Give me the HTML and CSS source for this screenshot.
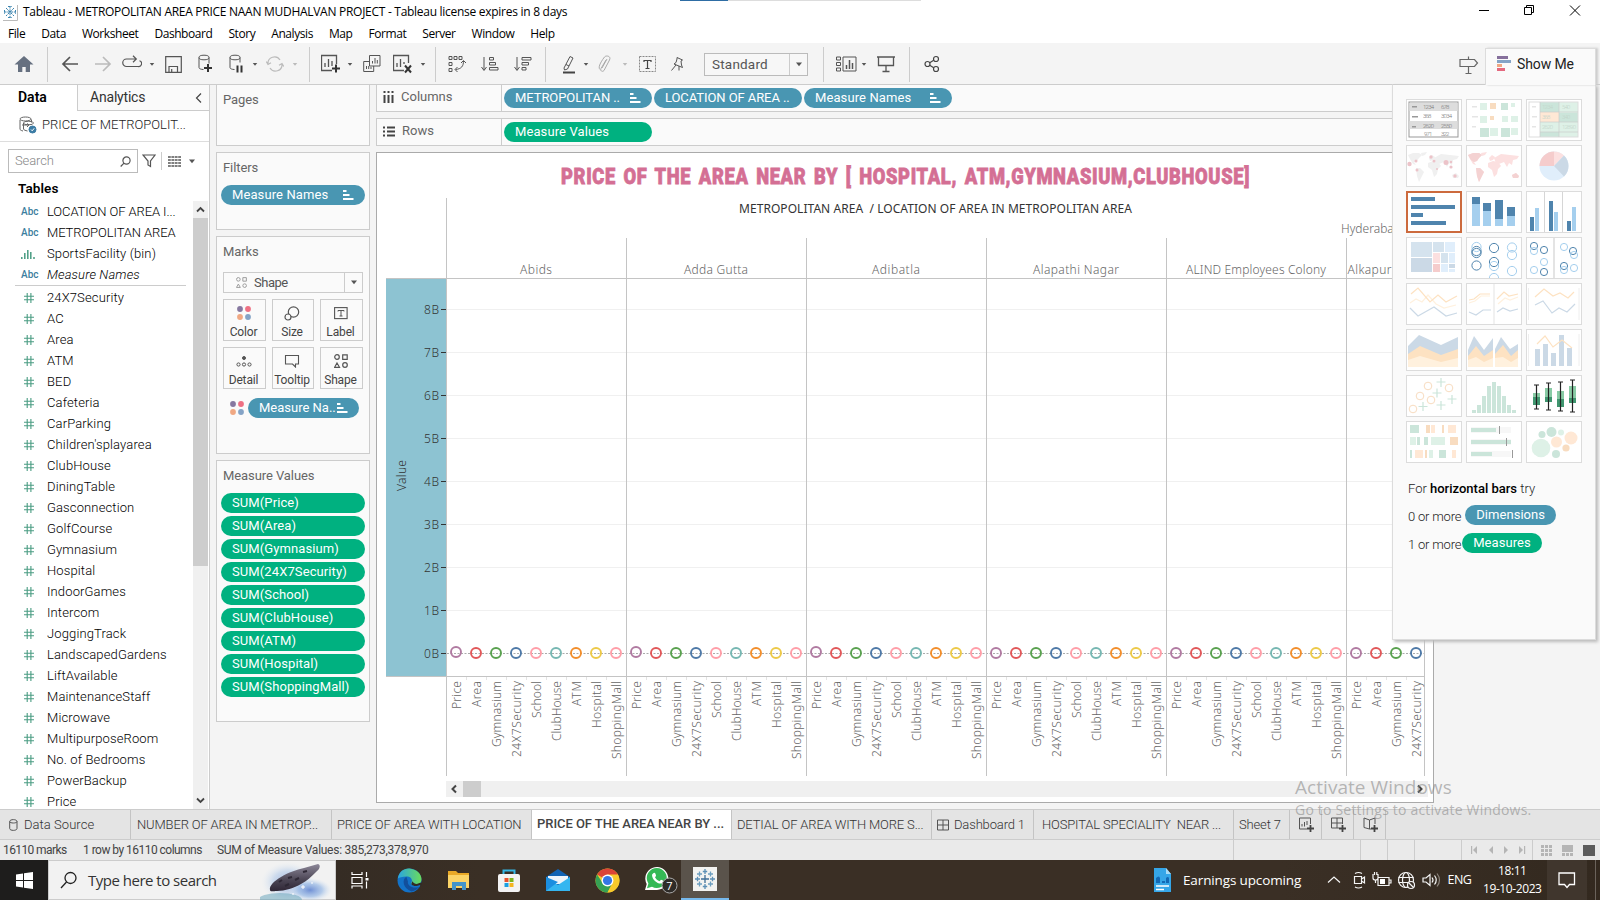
FILE: index.html
```html
<!DOCTYPE html>
<html lang="en">
<head>
<meta charset="utf-8">
<title>Tableau - METROPOLITAN AREA PRICE NAAN MUDHALVAN PROJECT</title>
<link rel="stylesheet" href="styles.css">
</head>
<body>
<svg width="0" height="0" class="defs">
  <defs>
    <symbol id="caret" viewBox="0 0 8 5"><path d="M1 .5h6L4 4.2z" fill="currentColor"/></symbol>
    <symbol id="sort" viewBox="0 0 12 12"><path d="M1 1h3.5v2H1zM1 5h6.500v2H1zM1 9h10.500v2H1z" fill="#fff"/></symbol>
    <symbol id="dots" viewBox="0 0 14 14"><circle cx="3" cy="3" r="2.900" fill="#8678a0"/><circle cx="11" cy="3" r="2.900" fill="#ee7083"/><circle cx="3" cy="11" r="2.900" fill="#f0a883"/><circle cx="11" cy="11" r="2.900" fill="#84a3c6"/></symbol>
    <symbol id="shapes" viewBox="0 0 14 14"><g fill="none" stroke="currentColor" stroke-width="1.200"><circle cx="3" cy="3" r="2.300"/><path d="M8.700.8h4.500v4.500H8.700zM3 9l2.500 4.300H.6z"/><circle cx="11" cy="11" r="2.300"/></g></symbol>
    <symbol id="hash" viewBox="0 0 10 10"><path d="M3.200 0v10M6.900 0v10M0 3.200h10M0 6.800h10" stroke="#4a9c82" stroke-width="1.100"/></symbol>
    <symbol id="bars" viewBox="0 0 14 10"><path d="M.8 10V8M3.800 10V4M6.800 10V1M9.800 10V3M13 10V8" stroke="#4a9c82" stroke-width="1.500"/></symbol>
    <symbol id="snow" viewBox="0 0 24 24"><rect width="24" height="24" fill="#f3f3f1"/><g stroke-width="1.300" fill="none"><path d="M12 8v8M8 12h8" stroke="#3f6e96"/><path d="M12 2v5M9.800 4.500h4.400M12 17v5M9.800 19.500h4.400M2 12h5M4.500 9.800v4.400M17 12h5M19.500 9.800v4.400" stroke="#5c8fb5"/><path d="M6.500 4.500v5M4 7h5M17.500 4.500v5M15 7h5M6.500 14.500v5M4 17h5M17.500 14.500v5M15 17h5" stroke="#6d9fc0"/></g></symbol>
    <symbol id="snow-small" viewBox="0 0 16 18"><path d="M15.500 2v15.500H1" fill="none" stroke="#bbb"/><path d="M8 3v12M2 9h12M4 5l8 8M12 5l-8 8M6 3.500h4M6 14.500h4M2.500 7v4M13.500 7v4" fill="none" stroke="#3f86b0" stroke-dasharray="2.500 .8"/></symbol>
  </defs>
</svg>

<header class="titlebar">
  <svg class="app-icon" width="16" height="18"><use href="#snow-small"/></svg>
  <span class="app-title">Tableau - METROPOLITAN AREA PRICE NAAN MUDHALVAN PROJECT - Tableau license expires in 8 days</span>
  <i class="load-bar"><b></b></i>
  <svg class="win-buttons" width="110" height="20" fill="none" stroke="#000" stroke-width="1"><path d="M4 10.500h10M49.500 7.500h7v7h-7zM51.500 7.500v-2h7v7h-2M95 5.500l10 10M105 5.500l-10 10"/></svg>
</header>

<nav class="menu"><span>File</span><span>Data</span><span>Worksheet</span><span>Dashboard</span><span>Story</span><span>Analysis</span><span>Map</span><span>Format</span><span>Server</span><span>Window</span><span>Help</span></nav>

<div class="toolbar">
  <div class="group g-home"><svg width="20" height="18"><path d="M10 1l9.500 8.500H16V17h-4.300v-5H8.300v5H4V9.500H.5z" fill="#667080"/></svg></div>
  <div class="group g-nav">
    <svg class="t-back" width="18" height="18"><path d="M17 9H2M9 2L2 9l7 7" fill="none" stroke="#555" stroke-width="1.700"/></svg>
    <svg class="t-fwd" width="18" height="18"><path d="M1 9h15M9 2l7 7-7 7" fill="none" stroke="#bbb" stroke-width="1.700"/></svg>
    <svg class="t-redo" width="20" height="18"><path d="M14 4H4.500a3.500 3.500 0 000 7.500h11.500a3 3 0 001.500-5.800M11 .8L14.300 4 11 7.200" fill="none" stroke="#555" stroke-width="1.200"/></svg>
    <svg class="car first" width="6" height="5"><use href="#caret"/></svg>
    <svg class="t-save" width="17" height="17"><path d="M.7.700h15.600v15.600H.7zM4 16v-5.500h8.500V16M6.700 16v-3" fill="none" stroke="#555" stroke-width="1.200"/></svg>
    <svg class="t-db" width="16" height="20"><path d="M1 3.500v10c0 1.200 2 2 4.500 2M11 3.500v6" fill="none" stroke="#555"/><ellipse cx="6" cy="3.500" rx="5" ry="2.300" fill="none" stroke="#555"/><path d="M10 10v8M6 14h8" stroke="#333" stroke-width="2"/></svg>
    <svg class="t-pause" width="15" height="20"><path d="M1 3.500v10c0 1.200 2 2 4.500 2M11 3.500v5" fill="none" stroke="#555"/><ellipse cx="6" cy="3.500" rx="5" ry="2.300" fill="none" stroke="#555"/><path d="M8.500 11.500v7M12.500 11.500v7" stroke="#333" stroke-width="2"/></svg>
    <svg class="car" width="6" height="5"><use href="#caret"/></svg>
    <svg class="t-ref" width="18" height="18"><path d="M2 9a6.500 6.500 0 0112-4M16 9A6.500 6.500 0 014 13M.3 6.500L2 9.500l3-1.800M17.800 11.500L16 8.500l-3 1.800" fill="none" stroke="#bbb" stroke-width="1.200"/></svg>
    <svg class="car dim" width="6" height="5"><use href="#caret"/></svg>
  </div>
  <div class="group g-sheet">
    <svg width="20" height="20"><path d="M15.500 10V1.500h-15v15H11M4 13V9M7.500 13V5M11 12V7" fill="none" stroke="#555" stroke-width="1.300"/><path d="M15 10.500v8M11 14.500h8" stroke="#333" stroke-width="2"/></svg>
    <svg class="car c1" width="6" height="5"><use href="#caret"/></svg>
    <svg class="t-dup" width="18" height="18" fill="none" stroke="#555"><path d="M6.500.5h10.500v10.500H6.500zM6.500 6.500H.7v10h10V11M9.500 8.500V6M12 8.500V3M14.300 8.500V5M3.500 14v-3M5.700 14v-3M8 14v-2"/></svg>
    <svg class="t-clr" width="20" height="20"><path d="M15.500 9V1.500h-15v15H11M4 13V9M7.500 13V5M11 10V8" fill="none" stroke="#555" stroke-width="1.300"/><path d="M12 11.500l6 7M18 11.500l-6 7" stroke="#333" stroke-width="2"/></svg>
    <svg class="car c2" width="6" height="5"><use href="#caret"/></svg>
  </div>
  <div class="group g-sort">
    <svg width="18" height="18" fill="none" stroke="#555"><path d="M1 1.500h3v3H1zM6 1.500h3v3H6zM11 1.500h3v3h-3zM1 7.500h3v3H1zM1 13.500h3v3H1zM15.500 6c0 5-2 8-8 8.500M13 8l2.500-2.500L18 8M9.500 12L7 14.500 9.500 17"/></svg>
    <svg width="18" height="18" fill="none" stroke="#555"><path d="M3 2v13M.5 12L3 15.500 5.500 12M8.500 2.500h4v2.500h-4zM8.500 7.500h6v2.500h-6zM8.500 12.500h8.500v2.500h-8.500z"/></svg>
    <svg width="18" height="18" fill="none" stroke="#555"><path d="M3 2v13M.5 12L3 15.500 5.500 12M8 2.500h9v2.500H8zM8 7.500h6.500v2.500H8zM8 12.500h4v2.500H8z"/></svg>
  </div>
  <div class="group g-edit">
    <svg width="14" height="19"><path d="M2 13L8 1.500l3 1.500L5.500 14l-3 1zM4 9.500l3 1.500" fill="none" stroke="#555"/><path d="M1 17.500h12" stroke="#444" stroke-width="2"/></svg>
    <svg class="car e1" width="6" height="5"><use href="#caret"/></svg>
    <svg class="e2" width="14" height="18"><path d="M4 13l5-9M2 14.500C-1 12 5 4 6.500 2s7-1 5 3L6 15.500c-2 2-4 0-3-2L8 5" fill="none" stroke="#aaa"/></svg>
    <svg class="car dim e3" width="6" height="5"><use href="#caret"/></svg>
    <svg class="e4" width="18" height="17"><rect x=".5" y=".5" width="16" height="15" fill="none" stroke="#888" stroke-dasharray="2 1"/><path d="M5 6V4.500h7V6M8.500 4.500v8M6.500 12.500h4" stroke="#444" fill="none" stroke-width="1.200"/></svg>
    <svg class="e5" width="14" height="17"><path d="M7 1.500l5.500 2.500-1.500 1 .5 4 1 2.500-8.500-3.500L6 6.500 7 3zM6 9L1.500 14.500M9 10v4.500" fill="none" stroke="#555"/></svg>
    <div class="fit-select"><span>Standard</span><i><svg width="8" height="5"><use href="#caret"/></svg></i></div>
  </div>
  <div class="group g-view">
    <svg width="21" height="16" fill="none" stroke="#555"><path d="M.5 1h4v3h-4zM.5 6.500h4v3h-4zM.5 12h4v3h-4zM7 1h13v14H7z"/><path d="M10.500 13V9M13.500 13V4M16.500 13V7" stroke-width="1.500"/></svg>
    <svg class="car v1" width="6" height="5"><use href="#caret"/></svg>
    <svg class="v2" width="18" height="18" fill="none" stroke="#555"><path d="M0 2h18M1.500 2v8.500h15V2M9 10.500v6M5.500 16.500h7" stroke-width="1.300"/></svg>
  </div>
  <div class="group g-share"><svg width="16" height="18" fill="none" stroke="#444" stroke-width="1.200"><circle cx="3.500" cy="9" r="2.500"/><circle cx="12" cy="4" r="2.500"/><circle cx="12" cy="14" r="2.500"/><path d="M5.700 7.700l4-2.400M5.700 10.300l4 2.400"/></svg></div>
  <svg class="guide" width="20" height="20" fill="none" stroke="#666" stroke-width="1.200"><path d="M1 4.500h14.500L18.500 8l-3 3.500H1zM9.500 1.500v3M9.500 11.500v6.500M6.500 18.500h6"/></svg>
  <div class="showme-tab"><svg width="14" height="16"><path d="M0 0h11v3H0z" fill="#86709c"/><path d="M0 4h14v3H0z" fill="#84a3c6"/><path d="M0 8h5v3H0z" fill="#f0a883"/><path d="M0 12h8v3H0z" fill="#e4697f"/></svg><span>Show Me</span></div>
</div>

<main class="work">
  <aside class="data-pane">
    <div class="pane-tabs"><b>Data</b><span>Analytics<svg width="7" height="10"><path d="M6 .5L1.500 5 6 9.500" fill="none" stroke="#444" stroke-width="1.200"/></svg></span></div>
    <div class="source"><svg width="18" height="18" fill="none" stroke="#666"><path d="M1 4v9c0 1 1 1.500 3 2M4.500 7v6c0 1 2 1.500 4 2M12.500 3.500v3"/><ellipse cx="6.500" cy="3" rx="5.500" ry="2"/><ellipse cx="9.500" cy="7" rx="5" ry="1.800"/><path d="M3 9h7M8 7.500L10 9l-2 2"/><circle cx="13.500" cy="13.500" r="3.500" fill="#3b7ca5" stroke="#3b7ca5"/><path d="M12 13.500l1.200 1.300 2-2.500" stroke="#fff"/></svg><span>PRICE OF METROPOLIT...</span></div>
    <div class="search-row">
      <div class="search"><span>Search</span><svg width="11" height="11" fill="none" stroke="#555" stroke-width="1.200"><circle cx="6.500" cy="4.500" r="3.600"/><path d="M4 7.200L.7 10.500"/></svg></div>
      <svg class="funnel" width="14" height="14"><path d="M1 1h12L8.500 7v5.500L6 11V7z" fill="none" stroke="#555" stroke-width="1.200"/></svg>
      <i class="vr"></i>
      <svg class="cols" width="13" height="11"><path d="M0 1h13M0 4h13M0 7h13M0 10h13" stroke="#555" stroke-width="1.400" stroke-dasharray="2.800 .6"/></svg>
      <svg class="car" width="8" height="5"><use href="#caret"/></svg>
    </div>
    <h3>Tables</h3>
    <div class="field-area">
      <div class="fields" id="fields"></div>
      <div class="vscroll"><svg width="15" height="17"><path d="M4 10.500L7.500 7l3.500 3.500" fill="none" stroke="#444" stroke-width="1.800"/></svg><i></i><svg width="15" height="17"><path d="M4 6.500L7.500 10 11 6.500" fill="none" stroke="#444" stroke-width="1.800"/></svg></div>
    </div>
  </aside>

  <section class="cards">
    <div class="card pages"><h4>Pages</h4></div>
    <div class="card filters"><h4>Filters</h4><div class="pill blue"><span>Measure Names</span><svg width="12" height="12"><use href="#sort"/></svg></div></div>
    <div class="card marks"><h4>Marks</h4>
      <div class="mark-select"><svg width="11" height="11"><use href="#shapes"/></svg><span>Shape</span><i><svg width="8" height="5"><use href="#caret"/></svg></i></div>
      <div class="mark-grid">
        <div><svg width="14" height="14"><use href="#dots"/></svg>Color</div>
        <div><svg width="16" height="15" fill="none" stroke="#555" stroke-width="1.200"><circle cx="9.500" cy="6" r="5.200"/><circle cx="4" cy="11" r="3" fill="#fafafa"/></svg>Size</div>
        <div><svg width="14" height="14"><rect x=".6" y="1.600" width="12.500" height="11" fill="none" stroke="#555" stroke-width="1.100"/><path d="M4 5.500V4.500h6v1M7 4.500v5.500M5.500 10h3" stroke="#555" fill="none"/></svg>Label</div>
        <div><svg width="16" height="14" fill="none" stroke="#555"><circle cx="8" cy="4" r="1.500" fill="#555"/><circle cx="2.500" cy="10.500" r="1.600"/><circle cx="8" cy="10.500" r="1.600"/><circle cx="13.500" cy="10.500" r="1.600"/></svg>Detail</div>
        <div><svg width="16" height="14"><path d="M1.500 1.500h13v8.500h-3V13l-3-3h-7z" fill="none" stroke="#555" stroke-width="1.100"/></svg>Tooltip</div>
        <div><svg width="14" height="14" class="dark"><use href="#shapes"/></svg>Shape</div>
      </div>
      <div class="mark-pill"><svg width="14" height="14"><use href="#dots"/></svg><div class="pill blue"><span>Measure Na..</span><svg width="12" height="12"><use href="#sort"/></svg></div></div>
    </div>
    <div class="card values"><h4>Measure Values</h4><div class="stack" id="measures"></div></div>
  </section>

  <section class="sheet">
    <div class="shelf"><div class="label"><svg width="11" height="12"><path d="M1.500 0v2M1.500 4v8M5.500 0v2M5.500 4v8M9.500 0v2M9.500 4v8" stroke="#444" stroke-width="2"/></svg>Columns</div>
      <div class="pill blue cap"><span>METROPOLITAN ..</span><svg width="12" height="12"><use href="#sort"/></svg></div>
      <div class="pill blue cap"><span>LOCATION OF AREA ..</span></div>
      <div class="pill blue"><span>Measure Names</span><svg width="12" height="12"><use href="#sort"/></svg></div></div>
    <div class="shelf"><div class="label"><svg width="12" height="11"><path d="M0 1.500h2M4 1.500h8M0 5.500h2M4 5.500h8M0 9.500h2M4 9.500h8" stroke="#444" stroke-width="2"/></svg>Rows</div><div class="pill green"><span>Measure Values</span></div></div>
    <div class="viz">
      <svg id="chart" width="1056" height="624" viewBox="377 153 1056 624"></svg>
      <div class="hscroll"><svg width="17" height="16"><path d="M10 4.500L6.500 8l3.500 3.500" fill="none" stroke="#444" stroke-width="2"/></svg><i></i><svg width="17" height="16"><path d="M7 4.500L10.500 8 7 11.500" fill="none" stroke="#444" stroke-width="2"/></svg></div>
    </div>
  </section>

  <aside class="showme">
    <div class="thumbs" id="thumbs"></div>
    <p class="tip">For <b>horizontal bars</b> try</p>
    <p class="need"><span>0 or more</span><span class="pill blue">Dimensions</span></p>
    <p class="need second"><span>1 or more</span><span class="pill green">Measures</span></p>
  </aside>
</main>

<div class="tabs">
  <div class="w131 src"><svg width="9" height="12" fill="none" stroke="#555"><path d="M.7 2.500v7c0 2.500 7.300 2.500 7.300 0v-7c0-2.500-7.300-2.500-7.300 0c0 2 7.300 2 7.300 0"/></svg>Data Source</div>
  <div class="w201">NUMBER OF AREA IN METROP...</div>
  <div class="w200">PRICE OF AREA WITH LOCATION</div>
  <div class="w200 on">PRICE OF THE AREA NEAR BY ...</div>
  <div class="w200">DETIAL OF AREA WITH MORE S...</div>
  <div class="w102"><svg width="12" height="12" fill="none" stroke="#555"><path d="M.5 1h11v10H.5zM6 1v10M.5 6h11"/></svg>Dashboard 1</div>
  <div class="w200 hosp">HOSPITAL SPECIALITY &nbsp;NEAR ...</div>
  <div class="w56">Sheet 7</div>
  <div class="w32"><svg width="16" height="16"><path d="M11.500 7V1h-11v11H8M3 9.500V7M5.500 9.500V5M8 8V4" fill="none" stroke="#555"/><path d="M11.500 8v7M8 11.500h7" stroke="#444" stroke-width="1.800"/></svg></div>
  <div class="w32"><svg width="16" height="16"><path d="M11.500 7V1h-11v10H8M6 1v10M.5 6h11" fill="none" stroke="#555"/><path d="M11.500 8v7M8 11.500h7" stroke="#444" stroke-width="1.800"/></svg></div>
  <div class="w32"><svg width="16" height="16"><path d="M6.500 3v9L1 10.500V1l5.500 2L12 1v6M6.500 12H8" fill="none" stroke="#555"/><path d="M11.500 8v7M8 11.500h7" stroke="#444" stroke-width="1.800"/></svg></div>
</div>
<div class="status">
  <span class="s1">16110 marks</span><span class="s2">1 row by 16110 columns</span><span class="s3">SUM of Measure Values: 385,273,378,970</span>
  <i class="w127"></i><i class="w27"></i><i class="w27"></i><i class="w47"></i>
  <i class="w71"><svg width="60" height="12" fill="#b5b5b5"><path d="M3 2h1.200v8H3zM9 2v8L5 6zM25 2v8l-4-4zM36 2v8l4-4zM51 2v8l4-4zM56 2h1.200v8H56z"/></svg></i>
  <i class="w67"><svg width="54" height="12"><path d="M0 1h3v3H0zM4 1h3v3H4zM8 1h3v3H8zM0 5h3v3H0zM4 5h3v3H4zM8 5h3v3H8zM0 9h3v3H0zM4 9h3v3H4zM8 9h3v3H8zM21 1h11v7H21zM21 9h3v3h-3zM25 9h3v3h-3zM29 9h3v3h-3z" fill="#b5b5b5"/><path d="M42 1h12v11H42z" fill="#5c5c5c"/></svg></i>
</div>

<footer class="taskbar">
  <div class="start"><svg width="17" height="17" fill="#fff"><path d="M0 2.500L7 1.500V8H0zM8 1.300L17 0v8H8zM0 9h7v6.500L0 14.500zM8 9h9v8l-9-1.300z"/></svg></div>
  <div class="tb-search"><svg width="18" height="18" fill="none" stroke="#222" stroke-width="1.300"><circle cx="10.500" cy="7" r="5.500"/><path d="M6.500 11L1 17"/></svg><span>Type here to search</span>
    <svg class="art" width="72" height="38" viewBox="0 0 72 38"><defs><radialGradient id="haze"><stop offset="0" stop-color="#6f8fd4"/><stop offset=".55" stop-color="#9dbce6" stop-opacity=".75"/><stop offset="1" stop-color="#dce8f4" stop-opacity="0"/></radialGradient><linearGradient id="rock" x2="0" y2="1"><stop stop-color="#8c8798"/><stop offset=".6" stop-color="#4a4453"/><stop offset="1" stop-color="#2f2635"/></linearGradient></defs><ellipse cx="28" cy="20" rx="27" ry="20" fill="url(#haze)" opacity=".6"/><ellipse cx="50" cy="28" rx="22" ry="12" fill="url(#haze)"/><ellipse cx="20" cy="38" rx="22" ry="7" fill="#5fa0b8" opacity=".5"/><path d="M10 28c-1-4 4-9 11-13 8-5 15-7 23-9l14-4c3 1 2 5-2 8-5 5-9 9-15 12-7 4-16 7-24 7-4 0-7 1-7-1z" fill="url(#rock)"/><path d="M19 20l3-2M28 16l4-1M25 24l4-2M35 18l4-2M43 10l4-1" stroke="#2e2835" stroke-width="2"/><path d="M43 23v4M41 25h4M33 31v2M52 20v2" stroke="#fff"/></svg></div>
  <div class="tb-icons">
    <svg width="18" height="18" fill="none" stroke="#fff" stroke-width="1.200"><path d="M1 1v2.500h10V1M1 6.500h10v6H1zM1 17.500V15h10v2.500M15.500 1v5M15.500 10.500v7"/><path d="M14.500 7h3v2.500h-3z" fill="#fff" stroke="none"/></svg>
    <svg width="25" height="25" viewBox="0 0 24 24"><defs><linearGradient id="e1" x2="1"><stop stop-color="#2aa5e0"/><stop offset="1" stop-color="#6bdc5b"/></linearGradient></defs><circle cx="12" cy="12" r="11.500" fill="#1372c8"/><path d="M.8 10C2 3 7-.3 13 .6c6 .8 10.500 5 10.500 10 0 4-3 6-6.500 6-3 0-4-1.500-3-3 1-2 0-5.500-5-5.500-4 0-7 1-8.200 2z" fill="url(#e1)"/><path d="M9 8.500C4.500 11 5.500 20 14 22.500c3-.5 6-2.500 7.500-4.500-6 2.500-12-1-11-5z" fill="#124f9c"/><path d="M14.500 12c.8 1.500-1 2.500-.5 3.800 2 2 5.500 1.600 7.500.4l1.500 1 1.500-3.500-3 .8c-2 1.500-6 1-7-2.500z" fill="#322b25"/></svg>
    <svg width="24" height="22"><path d="M1 2h8l2 2h11v15H1z" fill="#e9a927"/><path d="M1 6h21v13H1z" fill="#fbd467"/><path d="M5 21v-8h14v8h-4v-4H9v4z" fill="#4394c9"/></svg>
    <svg width="24" height="25"><path d="M6.500 7V2.500h11V7" fill="none" stroke="#35b6e4" stroke-width="2"/><rect x="1" y="6" width="22" height="18" rx="2" fill="#f3f3f3"/><path d="M7.500 10h4v4h-4z" fill="#e9532c"/><path d="M12.500 10h4v4h-4z" fill="#7db51b"/><path d="M7.500 15h4v4h-4z" fill="#1c9fe0"/><path d="M12.500 15h4v4h-4z" fill="#f4b51f"/></svg>
    <svg width="26" height="24"><path d="M1 9L13 1l12 8v14H1z" fill="#1263b3"/><path d="M3 8h20v8H3z" fill="#eef4fa"/><path d="M1 9l12 8 12-8v14H1z" fill="#35b6f0"/><path d="M1 23l12-9L1 9z" fill="#1b8ee0"/></svg>
    <svg width="25" height="25" viewBox="0 0 24 24"><circle cx="12" cy="12" r="11.500" fill="#f8ca2c"/><path d="M12 12L2 6.300A11.500 11.500 0 0122 6.300z" fill="#dc4437"/><path d="M2 6.300A11.500 11.500 0 0012 23.500L16.500 15 7 14z" fill="#36a154"/><path d="M12 6.300h10A11.500 11.500 0 0112 23.500l5-9z" fill="#f8ca2c"/><circle cx="12" cy="12" r="5.700" fill="#fff"/><circle cx="12" cy="12" r="4.400" fill="#3577e5"/></svg>
    <svg class="wa" width="34" height="28"><path d="M1 24l1.700-6A11.500 11.500 0 1113 24H7z" fill="#fff"/><path d="M3 22.300l1.400-4.800A10 10 0 118 20.800z" fill="#35b956"/><path d="M9 7.500c2-2 3 1 3 2.500l-1 1.200c1 2 2.500 3 4.500 4l1.500-1.500c2 .5 3.500 1.500 2 3-3 3-11-2-11-8z" fill="#fff"/><circle cx="25.500" cy="19.500" r="7.500" fill="#2e2b28" stroke="#aaa"/><text x="25.500" y="24" text-anchor="middle">7</text></svg>
    <div class="active"><svg width="24" height="24"><use href="#snow"/></svg></div>
  </div>
  <div class="tray">
    <svg width="19" height="24"><path d="M1 0h12l5 6v18H1z" fill="#35a6e8"/><path d="M13 0l5 6h-5z" fill="#a9dcf7"/><path d="M3 10q3-3 4 0v5H3zM9 13h3v2H9zM13 10q2-2 3 0v5h-3z" fill="#1369b5"/><path d="M3 18h13M3 21.500h8" stroke="#fff" stroke-width="1.500"/></svg>
    <span class="news">Earnings upcoming</span>
    <svg class="tray-icons" width="116" height="20" fill="none" stroke="#f5f5f5" stroke-width="1.200"><path d="M1 12.500L7 7l6 5.500M27.500 6.500h7v7h-7zM34.500 9l3-2v6l-3-2M28 3.500q3.500-2 7 0M28 17q3.500 2 7 0M51 7.500h11v8H51zM62 10h2v3h-2M46 4v4q0 2 2.500 2t2.500-2V4M48.500 10v3M47.500 2v3M49.800 2v3"/><path d="M53 9h5v5h-5z" fill="#fff" stroke="none"/><circle cx="79" cy="10" r="7.500"/><ellipse cx="79" cy="10" rx="3.500" ry="7.500"/><path d="M71.500 7.500h15M71.500 12.500h10"/><circle cx="84" cy="15" r="3.500" fill="#3a3027"/><path d="M81.500 12.500l5 5M96 8h3l4-3.500v11L99 12h-3zM105 7.500q2 2.500 0 5M107.500 5.500q3.500 4.500 0 9"/><path d="M110 3.500q5 6.500 0 13" stroke="#8b837b"/></svg>
    <span class="eng">ENG</span>
    <span class="clock">18:11<br>19-10-2023</span>
    <div class="action"><svg width="18" height="18"><path d="M1 2h15.500v11.500h-5L9 16.500 6.500 13.500H1z" fill="none" stroke="#fff" stroke-width="1.300"/></svg></div>
    <i class="peek"></i>
  </div>
</footer>

<div class="activate"><b>Activate Windows</b><span>Go to Settings to activate Windows.</span></div>
<script src="app.js"></script>
</body>
</html>
```
FILE: styles.css
```css
* { box-sizing: border-box; }
body { margin: 0; width: 1600px; height: 900px; overflow: hidden; position: relative; display: flex; flex-direction: column; background: #fff; color: #333; font: 300 13px/16px Roboto, "Open Sans", sans-serif; }
svg { display: block; flex: none; }
h3, h4, p { margin: 0; }
.defs { position: absolute; }

.titlebar { height: 24px; display: flex; align-items: center; padding-left: 2px; font: 12px/16px "Open Sans", "Noto Sans", sans-serif; color: #000; position: relative; }
.app-title { margin-left: 5px; white-space: nowrap; letter-spacing: -.28px; }
.load-bar { position: absolute; left: 680px; top: 0; width: 241px; height: 1px; background: #ddd; }
.load-bar b { display: block; width: 48px; height: 1px; background: #2e6da4; }
.win-buttons { margin-left: auto; margin-right: 15px; margin-bottom: 4px; }
.menu { height: 19px; display: flex; gap: 16px; padding-left: 8px; font: 12px/20px "Open Sans", "Noto Sans", sans-serif; color: #000; letter-spacing: -.43px; }

.toolbar { height: 41px; background: #f4f4f4; display: flex; color: #555; position: relative; }
.group { display: flex; align-items: center; margin: 4px 0 2px; height: 35px; border-right: 1px solid #ccc; }
.group > svg { margin-bottom: 1px; }
.g-home { width: 48px; padding-left: 14px; }
.g-nav { width: 262px; padding-left: 13px; }
.t-fwd { margin-left: 15px; } .t-redo { margin-left: 10px; } .g-nav .car { margin-left: 8px; } .g-nav .first { margin-left: 7px; }
.t-save { margin-left: 10px; } .t-db { margin-left: 16px; } .t-pause { margin-left: 15px; } .t-ref { margin-left: 8px; }
.dim { color: #bbb; }
.g-sheet { width: 126px; padding-left: 11px; }
.c1 { margin-left: 6px; } .t-dup { margin-left: 10px; } .t-clr { margin-left: 12px; } .c2 { margin-left: 7px; }
.g-sort { width: 110px; padding-left: 12px; gap: 15px; }
.g-edit { width: 278px; padding-left: 16px; }
.e1 { margin-left: 7px; } .e2 { margin-left: 9px; } .e3 { margin-left: 10px; } .e4 { margin-left: 11px; } .e5 { margin-left: 13px; }
.fit-select { margin: 0 0 1px 20px; width: 104px; height: 23px; border: 1px solid #bbb; background: #f7f7f7; display: flex; justify-content: space-between; padding-left: 7px; line-height: 21px; font-size: 13.5px; font-weight: 400; letter-spacing: .2px; }
.fit-select i, .mark-select i { width: 18px; border-left: 1px solid #ccc; display: grid; place-items: center; }
.g-view { width: 86px; padding-left: 12px; }
.v1 { margin-left: 4px; } .v2 { margin-left: 10px; }
.g-share { border: 0; padding-left: 14px; }
.guide { position: absolute; left: 1459px; top: 12px; }
.showme-tab { position: absolute; left: 1485px; top: 5px; width: 111px; height: 37px; background: #fafafa; border: 1px solid #dcdcdc; border-bottom: 0; display: flex; align-items: center; padding: 0 0 7px 11px; gap: 6px; z-index: 4; color: #222; font-size: 14px; font-weight: 400; box-shadow: 2px 0 2px #ccc; letter-spacing: -.1px; }

.work { height: 725px; display: flex; background: #f4f4f4; border-top: 1px solid #ccc; position: relative; }
.data-pane { width: 210px; background: #fff; border-right: 1px solid #ccc; display: flex; flex-direction: column; overflow: hidden; }
.pane-tabs { display: flex; height: 26px; line-height: 25px; }
.pane-tabs b { width: 77px; padding-left: 18px; color: #000; font-weight: 600; font-size: 14px; }
.pane-tabs span { flex: 1; border-left: 1px solid #ccc; border-bottom: 1px solid #ccc; background: #fafafa; padding: 0 7px 0 12px; display: flex; justify-content: space-between; align-items: center; font-size: 14px; font-weight: 400; letter-spacing: -.2px; }
.source { height: 31px; border-bottom: 1px solid #ddd; display: flex; align-items: center; padding: 0 0 3px 19px; gap: 5px; white-space: nowrap; letter-spacing: -.02px; color: #222; }
.search-row { display: flex; align-items: center; padding: 7px 0 0 8px; height: 31px; color: #555; }
.search { width: 130px; height: 24px; border: 1px solid #bbb; display: flex; align-items: center; justify-content: space-between; padding: 0 6px; color: #888; letter-spacing: -.1px; }
.funnel { margin-left: 4px; }
.vr { width: 1px; height: 18px; background: #ccc; margin: 0 6px 0 5px; }
.search-row .car { margin-left: 7px; }
h3 { font-size: 13.5px; line-height: 16px; font-weight: 600; color: #000; padding: 7px 0 0 18px; height: 28px; letter-spacing: .1px; }
.field-area { flex: 1; display: flex; min-height: 0; justify-content: space-between; }
.fields { width: 186px; padding-left: 15px; overflow: hidden; }
.field { height: 21px; display: grid; grid-template-columns: 32px 1fr; align-items: center; white-space: nowrap; color: #000; letter-spacing: .13px; }
.field svg, .field b { margin-left: 6px; }
.field svg.h { margin-left: 9px; }
.field b { font-size: 10px; color: #3c7e9e; font-weight: 500; letter-spacing: 0; font-style: normal; }
.field.up { letter-spacing: -.1px; }
.field.it { font-style: italic; }
.line { border-top: 1px solid #ccc; margin-bottom: 1px; }
.vscroll { width: 15px; background: #f0f0f0; display: flex; flex-direction: column; margin-right: 1px; }
.vscroll i { height: 348px; background: #cdcdcd; margin-bottom: auto; }

.cards { margin: -1px 0 0 6px; width: 154px; display: flex; flex-direction: column; gap: 6px; }
.card { border: 1px solid #ccc; background: #fafafa; padding: 0 4px; }
h4 { font-weight: 400; font-size: 13px; padding-left: 2px; color: #666; letter-spacing: -.08px; line-height: 16px; }
.pages { height: 62px; padding-top: 7px; }
.filters { height: 78px; padding-top: 7px; }
.marks { height: 218px; padding-top: 7px; }
.values { height: 262px; padding-top: 7px; }
.pill { height: 20px; border-radius: 10px; color: #fff; display: flex; align-items: center; justify-content: space-between; padding: 0 11px; white-space: nowrap; font-weight: 400; letter-spacing: .1px; }
.blue { background: #4996b2; }
.green { background: #00b180; }
.filters .pill { margin-top: 9px; width: 144px; }
.mark-select { margin: 12px 1px 0 2px; width: 140px; height: 21px; border: 1px solid #ccc; display: flex; align-items: center; color: #555; font-weight: 400; letter-spacing: -.5px; }
.mark-select > svg { margin: 0 7px 0 12px; color: #999; }
.mark-select i { height: 19px; margin-left: auto; color: #555; }
.mark-grid { margin: 6px 0 0 2px; display: grid; grid-template-columns: 43px 42px 43px; gap: 6px; font-size: 12px; line-height: 14px; width: 140px; font-weight: 400; color: #444; letter-spacing: -.15px; }
.mark-grid div { height: 42px; border: 1px solid #ccc; display: flex; flex-direction: column; align-items: center; justify-content: space-between; padding: 6px 2px 1px 0; white-space: nowrap; }
.mark-grid div > svg { color: #555; }
.mark-pill { display: flex; align-items: center; margin: 9px 0 0 9px; gap: 4px; }
.mark-pill .pill { width: 111px; padding-right: 11px; letter-spacing: 0; }
.stack { display: flex; flex-direction: column; gap: 3px; margin-top: 9px; width: 144px; }

.sheet { margin: -1px 0 0 6px; width: 1058px; flex: none; display: flex; flex-direction: column; gap: 6px; }
.shelf { height: 28px; border: 1px solid #ccc; background: #fafafa; display: flex; align-items: center; gap: 2px; padding-bottom: 1px; }
.shelf .label { width: 125px; height: 27px; border-right: 1px solid #ccc; display: flex; align-items: center; gap: 7px; padding: 0 0 1px 6px; color: #666; font-size: 13px; font-weight: 400; }
.shelf .pill { width: 148px; }
.shelf .pill.cap { letter-spacing: -.08px; }
.viz { height: 651px; background: #fff; border: 1px solid #aaa; }
.hscroll { margin: 4px 5px 0 69px; height: 16px; background: #f0f0f0; display: flex; }
.hscroll i { width: 18px; background: #cdcdcd; margin-right: auto; }
#chart { font-family: "Noto Sans", "Open Sans", sans-serif; font-size: 12px; font-weight: 300; fill: #666; }
#chart .head { font-family: Roboto, sans-serif; font-weight: 900; font-size: 22.5px; fill: #d46f94; stroke: #d46f94; stroke-width: .8; letter-spacing: .8px; word-spacing: 3px; }
#chart .sub { fill: #333; font-weight: 400; }
#chart .axis { fill: #333; }

.showme { position: absolute; left: 1392px; top: -1px; width: 204px; height: 556px; background: #fafafa; border: 1px solid #dcdcdc; border-top-color: #ccc; box-shadow: 2px 2px 3px #bbb; padding: 14px 0 0 13px; z-index: 3; color: #222; }
.thumbs { display: grid; grid-template-columns: repeat(3, 56px); gap: 4px; }
.thumbs svg { background: #fff; border: 1px solid #dcdcdc; }
.thumbs svg.sel { border: 2px solid #cc6a3d; }
.tip { margin: 18px 0 0 2px; }
.tip b { font-weight: 500; color: #000; }
.need { display: flex; align-items: center; gap: 4px; margin: 8px 0 0 2px; height: 20px; letter-spacing: -.2px; }
.need.second { gap: 1px; }
.need > span:first-child { padding-top: 3px; }
.need .pill { letter-spacing: .05px; }

.tabs { height: 31px; background: #e4e4e4; border-top: 1px solid #ccc; border-bottom: 1px solid #ccc; display: flex; color: #333; white-space: nowrap; }
.tabs div { border-right: 1px solid #c4c4c4; display: flex; align-items: center; padding-left: 5px; gap: 5px; letter-spacing: -.15px; overflow: hidden; }
.tabs .on { background: #fff; font-weight: 500; color: #444; padding-bottom: 1px; letter-spacing: -.05px; }
.tabs .src { padding-left: 9px; letter-spacing: .05px; gap: 6px; }
.tabs .w201 { padding-left: 6px; }
.tabs .hosp { padding-left: 8px; }
.tabs .w32 { padding-left: 9px; }
.w131 { width: 131px; } .w201 { width: 201px; } .w200 { width: 200px; } .w102 { width: 102px; } .w56 { width: 56px; } .w32 { width: 32px; }
.status { height: 20px; background: #eaeaea; display: flex; line-height: 20px; font-size: 12px; font-weight: 400; color: #444; white-space: nowrap; }
.status i { border-right: 1px solid #ccc; display: flex; align-items: center; }
.s1 { width: 80px; padding-left: 3px; letter-spacing: -.6px; } .s2 { width: 134px; padding-left: 3px; letter-spacing: -.53px; } .s3 { width: 1020px; padding-left: 3px; border-right: 1px solid #ccc; letter-spacing: -.27px; }
.w127 { width: 127px; } .w27 { width: 27px; } .w47 { width: 47px; } .w71 { width: 71px; padding-left: 6px; }
.status .w67 { padding-left: 8px; border: 0; }

.taskbar { height: 40px; background: linear-gradient(90deg, #292521, #3a2f25 30%, #3a2f25 80%, #33291f); display: flex; font-family: "Open Sans", "Noto Sans", sans-serif; font-weight: 400; color: #fff; }
.start { width: 48px; background: #1e1d1c; display: grid; place-items: center; }
.tb-search { width: 288px; background: #f2f2f2; border: 1px solid #ccc; color: #333; display: flex; align-items: center; font-size: 15px; padding-left: 11px; position: relative; letter-spacing: -.5px; }
.tb-search span { margin-left: 10px; white-space: nowrap; }
.art { position: absolute; right: 3px; top: 1px; }
.tb-icons { display: grid; grid-template-columns: 48px repeat(6, 49.500px) 48px; width: 393px; align-items: center; justify-items: center; }
.tb-icons .wa { margin-left: 7px; }
.wa text { font: 11px "Open Sans"; fill: #fff; }
.active { width: 48px; height: 40px; background: #5a534b; border-bottom: 2px solid #76b9ed; display: grid; place-items: center; }
.tb-icons > svg:nth-child(n+2) { position: relative; left: 1px; }
.tray { margin-left: auto; width: 447px; display: flex; align-items: center; white-space: nowrap; }
.news { margin-left: 11px; width: 144px; font-size: 13.5px; letter-spacing: -.13px; }
.eng { margin-left: 5px; font-size: 12.500px; letter-spacing: -.5px; width: 30px; }
.clock { width: 70px; text-align: center; font-size: 12px; line-height: 18px; letter-spacing: -.4px; }
.action { width: 40px; height: 40px; background: #40362d; display: grid; place-items: center; margin-left: auto; }
.peek { width: 1px; height: 40px; background: #6b635b; margin: 0 4px 0 8px; }
.activate { position: absolute; left: 1295px; top: 774px; z-index: 6; font-family: "Open Sans", sans-serif; font-weight: 400; color: rgba(135,135,135,.58); display: flex; flex-direction: column; white-space: nowrap; }
.activate b { font-weight: 400; font-size: 19px; line-height: 26px; letter-spacing: .05px; }
.activate span { font-size: 14px; line-height: 20px; letter-spacing: .2px; }
```
FILE: app.js
```js
const fields = ['24X7Security','AC','Area','ATM','BED','Cafeteria','CarParking',"Children'splayarea",'ClubHouse','DiningTable','Gasconnection','GolfCourse','Gymnasium','Hospital','IndoorGames','Intercom','JoggingTrack','LandscapedGardens','LiftAvailable','MaintenanceStaff','Microwave','MultipurposeRoom','No. of Bedrooms','PowerBackup','Price'];
const abc = '<b>Abc</b>';
document.getElementById('fields').innerHTML =
  `<div class="field up">${abc}<span>LOCATION OF AREA I...</span></div>` +
  `<div class="field up">${abc}<span>METROPOLITAN AREA</span></div>` +
  '<div class="field"><svg width="14" height="10"><use href="#bars"/></svg><span>SportsFacility (bin)</span></div>' +
  `<div class="field it">${abc}<span>Measure Names</span></div><div class="line"></div>` +
  fields.map(f => `<div class="field"><svg class="h" width="10" height="10"><use href="#hash"/></svg><span>${f}</span></div>`).join('');

document.getElementById('measures').innerHTML =
  ['Price','Area','Gymnasium','24X7Security','School','ClubHouse','ATM','Hospital','ShoppingMall']
    .map(m => `<div class="pill green"><span>SUM(${m})</span></div>`).join('');

/* Chart: one pane per location, nine measures in each pane */
const marks = [['Price','#b07aa1',28],['Area','#e15759',26],['Gymnasium','#59a14f',66],['24X7Security','#4e79a7',76],['School','#ff9da7',37],['ClubHouse','#76b7b2',60],['ATM','#f28e2b',25],['Hospital','#edc948',47],['ShoppingMall','#ff9da7',78]];
const panes = [['Abids',32],['Adda Gutta',64],['Adibatla',48],['Alapathi Nagar',86],['ALIND Employees Colony',140],['Alkapur',0]];
let s = '<rect x="386" y="279" width="60" height="397" fill="#8dc3d2"/>';
const line = (x1, y1, x2, y2, c, extra = '') => { s += `<path d="M${x1} ${y1}L${x2} ${y2}" stroke="${c}" ${extra}/>`; };
for (let i = 0; i <= 8; i++) {
  const y = 653.5 - 43 * i;
  if (i) line(447, y, 1424, y, '#f0f0f0');
  line(441, y, 446, y, '#333');
  s += `<text class="axis" x="424" y="${y + 4.5}" textLength="15">${i}B</text>`;
}
line(447, 653.5, 1424, 653.5, '#aaa', 'stroke-dasharray="2 1.500"');
line(386, 278.5, 1424, 278.5, '#c4c4c4');
line(386, 676.5, 1424, 676.5, '#c4c4c4');
line(446.5, 198, 446.5, 776, '#c4c4c4');
line(1424.5, 238, 1424.5, 776, '#c4c4c4');
panes.forEach(([name, w], p) => {
  const x = 446.5 + 180 * p;
  if (p) line(x, 238, x, 776, '#c4c4c4');
  s += w ? `<text x="${x + 89.5 - w / 2}" y="274" textLength="${w}">${name}</text>` : `<text x="${x + 1}" y="274" textLength="44">${name}</text>`;
  marks.forEach(([m, c, len], i) => {
    const cx = x + 9.5 + 20 * i;
    if (cx > 1420) return;
    if (i) line(cx - 9.5, 677, cx - 9.5, 680, '#e4e4e4');
    s += `<circle cx="${cx}" cy="${i === 0 && p < 3 ? 652 : 653}" r="5" fill="none" stroke="${c}" stroke-width="1.900"/>`;
    s += `<text transform="translate(${cx + 5} ${681 + len}) rotate(-90)" textLength="${len}">${m}</text>`;
  });
});
s += '<text x="1341" y="233" textLength="60">Hyderabad</text>';
s += '<text class="head" x="561" y="184" textLength="689" lengthAdjust="spacingAndGlyphs">PRICE OF THE AREA NEAR BY [ HOSPITAL, ATM,GYMNASIUM,CLUBHOUSE]</text>';
s += '<text class="sub" x="739" y="213" textLength="393">METROPOLITAN AREA &#160;/ LOCATION OF AREA IN METROPOLITAN AREA</text>';
s += '<text class="axis" transform="translate(406 491) rotate(-90)" textLength="31">Value</text>';
document.getElementById('chart').innerHTML = s;

/* Show Me thumbnails, each on a 56 x 42 grid */
const r = (c, ...a) => a.map(([x, y, w, h]) => `<rect x="${x}" y="${y}" width="${w}" height="${h}" fill="${c}"/>`).join('');
const p = (c, d, w = 1.2) => `<path d="${d}" fill="none" stroke="${c}" stroke-width="${w}"/>`;
const f = (c, d) => `<path d="${d}" fill="${c}"/>`;
const ring = (c, ...a) => a.map(([x, y, q = 4.6]) => `<circle cx="${x}" cy="${y}" r="${q}" fill="none" stroke="${c}"/>`).join('');
const dot = (c, ...a) => a.map(([x, y, q]) => `<circle cx="${x}" cy="${y}" r="${q}" fill="${c}"/>`).join('');
const t = (c, ...a) => a.map(([x, y, v]) => `<text x="${x}" y="${y}" font-size="6" fill="${c}" textLength="${v.length * 2.8}">${v}</text>`).join('');
const D = '#4f84ad', L = '#a5cfee', G = '#cbe5da', g = '#def1e7', O = '#ffe8d5', O2 = '#f8dcc0', B = '#cbd9e6', b = '#e0eefb', R = '#f5cccc', K = '#fce0e0', Y = '#fde2c2', Y2 = '#fff1de';
const world = 'M2 10l5-2 6 0 3 2-3 3-2 3-3 1 2 3-3-1-3-5zM15 8l6-1-2 3-3 1zM10 23l4 0 4 4-2 4-3 6-2-6zM23 13l3-3 3 2-2 3-3 1zM22 18l5-2 5 1 3 4-3 3-1 5-3 3-2-7-4-3zM28 13l7-4 9 1 9 1-2 3-4 1-1 5-3-2-2 4-3-5-5 2-4-3zM46 30l4-2 3 3-1 2-5 0z';
const area = (a, c, d) => f(B, a) + f(Y, c) + f(Y2, d);
const thumbs = [
  `<rect x="3" y="3" width="49" height="35" fill="#fff" stroke="#999"/>` + r('#ddd',[3.5,4,48,8],[3.5,22,48,8]) + r('#999',[6,7,5,1.5],[6,17,6,1.5],[6,27,4,1.5]) + t('#777',[17,10,'1234'],[35,10,'678'],[17,19,'368'],[35,19,'3034'],[17,28.5,'2620'],[35,28.5,'2550'],[18,36.5,'971'],[35,36.5,'322']),
  r('#e5e5e5',[6,7,5,1.5],[6,17,6,1.5],[6,27,4,1.5]) + r(g,[14,4,7,7],[45,4,4,4],[14,17,7,7],[36,17,6,6],[45,17,7,6],[24,29,8,8],[45,29,7,7]) + r(G,[35,4,7,7],[14,29,9,9],[35,29,9,9]) + r(O2,[24,4,6,6],[24,17,4,4]),
  r(g,[14,3,38,35]) + r(G,[14,3,19,10],[33,14,19,9],[14,33,19,5]) + r(O,[14,13,19,10]) + '<rect x="3" y="3" width="49" height="35" fill="none" stroke="#ddd"/>' + p('#ccc','M14 3v35M33 3v35M14 13h38M14 23h38M14 33h38',.7) + r('#e5e5e5',[6,7,4,1.5],[6,17,5,1.5],[6,27,4,1.5]) + t('#c3d5cb',[16,10,'1234'],[36,10,'540'],[16,20,'368'],[36,20,'340'],[16,30,'2620'],[36,30,'12890']),
  f('#f0f0f0', world) + dot('#ecc3c9',[3.500,19,2.200],[25,12,1.700],[28,16,1.500],[40,17.500,2.500],[45,22,1.600],[11,25,1.500],[49,31,1.700],[10,16,1.500],[45,17,1.200],[31,24,1]),
  f(K, world) + f('#f4d2d2','M2 10l5-2 6 0 3 2-3 3-2 3-3 1-3-2zM10 23l4 0 4 4-2 4-3 6-2-6zM46 30l4-2 3 3-1 2-5 0z'),
  dot(b,[28,21,14.500]) + f(R,'M28 21H13.500A14.500 14.500 0 0128 6.500z') + f(K,'M28 21V6.500a14.500 14.500 0 0110 4z') + f(B,'M28 21l10-10.500a14.500 14.500 0 010 21z'),
  r(D,[5,6,24,4],[5,14,44,4],[5,22,12,4],[5,30,35,4]),
  r(L,[6,13,8,22],[17,20,8,15],[29,28,8,7],[41,25,8,10]) + r(D,[6,6,8,7],[17,12,8,8],[29,9,8,19],[41,16,8,9]),
  p('#ccc','M18.500 0v42M36.500 0v42',.8) + r(D,[4,26,4,14],[23,10,4,30],[41,30,4,10]) + r(L,[9,17,4,23],[28,21,4,19],[46,16,4,24]),
  r('#d5e3ee',[5,5,21,15],[27,5,11,10],[35,16,7,10]) + r(B,[5,21,21,14],[43,27,6,4]) + r(b,[39,5,10,10],[43,16,6,10],[35,27,7,8],[43,32,6,3]) + r(K,[27,16,7,10]) + r(R,[27,27,7,8]),
  ring(D,[10.500,14],[28,11],[28,25],[10.500,28.500]) + ring(L,[10.500,10],[46,10.500],[46,18],[28,29],[46,34],[28,41]) + ring(D,[10.500,16]),
  p('#bbb','M28 0v42',.8) + ring(D,[8,9,3.600],[18,13,3.600],[18,35,3.600],[47,14,3.600],[38,29,3.600]) + ring(L,[8,14,3.600],[18,25,3.600],[8,33,3.600],[38,10,3.600],[48,18,3.600],[38,33,3.600],[48,31,3.600]),
  p(Y2,'M4 20l6-4 6 3 6-7 8 9 8 4 12-3') + p(Y,'M5 11l7-6 12 14 8-7 8 7 11-6') + p(B,'M4 25l8 8 16-9 12 9 11-3'),
  p('#e8e8e8','M28 0v42') + p(Y2,'M3 20l6-2 6-5 9 0M32 21l7-6 5 2 8-3') + p(Y,'M3 17l5-1 6-5h10M31 16l7-7 5 4 9-2') + p(B,'M3 29l7 3 7-5h8M31 29l6-4 7 3 8-2'),
  p(Y,'M9 14l9-8 9 7 7-3 8 5 6-6') + p(B,'M9 22l8-4 9 12 7-5 8 4 8-8') + p('#eee','M2.500 5v32M53 5v32',1),
  area('M2 17L13 6l22 10 17-8v30H2z','M2 25l12-8 21 9 17-6v18H2z','M2 31l12-4 21 6 17-4v9H2z'),
  area('M2 21L8 7l10 14 9-12v29H2zM29 20l6-12 9 12 8-5v23H29z','M2 27l8-10 8 10 9-6v17H2zM29 25l8-9 8 11 7-6v17H29z','M2 31l8-3 8 5 9-4v9H2zM29 29l8-1 8 5 7-4v9H29z'),
  r(B,[9,20,5,17],[17,15,5,22],[25,24,5,13],[33,6,5,31],[41,19,5,18]) + p(Y,'M11 15l8-8 8 11 9-7 10 8') + p('#eee','M2.500 5v32M53 5v32',1),
  ring(O2,[7,34,3.800],[14,21,3.800],[22,11,3.800],[25,25,3.800],[43,13,3.800]) + p(G,'M17 27v9M12.500 31.500h9M31 13.500v9M26.500 18h9M35 3v9M30.500 7h9M35 26v9M30.500 30h9M46 20v9M41.500 24h9'),
  r(G,[6,35,4,3],[11,30,4,8],[16,21,4,17],[21,11,4,27],[26,7,4,31],[31,11,4,27],[36,21,4,17],[41,30,4,8],[46,35,4,3]),
  r('#88cba5',[7,18,7,4],[19,13,7,9],[31,16,7,8],[43,11,7,12]) + r('#3f966f',[7,22,7,8],[19,22,7,5],[31,24,7,8],[43,23,7,5]) + p('#222','M10.500 10v24M8 10h5M8 34h5M22.500 8v27M20 8h5M20 35h5M34.500 7v29M32 7h5M32 36h5M46.500 5v32M44 5h5M44 37h5'),
  r(G,[4,4,9,8],[11,16,3,8],[18,16,4,8],[4,29,2,8],[33,29,7,8]) + r(O2,[20,4,4,8],[36,4,2,8],[44,16,8,8],[19,29,2,8]) + r(O,[25,4,4,8],[42,4,8,8],[9,29,8,8],[46,29,4,8]) + r(g,[4,16,6,8],[25,16,14,8],[23,29,4,8]),
  r('#f7f7f7',[5,6,40,6],[5,18,40,6],[5,30,40,6]) + r(G,[5,7,25,4],[5,19,40,4],[5,31,21,4]) + p('#999','M33.500 5v8M40.500 17v8M46.500 29v8',1),
  dot(g,[15,27,9.300],[35,11.500,3]) + dot(G,[25.500,11,5],[16,13.500,3.500],[30,33,4]) + dot(O,[30.500,21,5.500],[45,17,6.500]) + dot(O2,[40,27,3.600])
];
document.getElementById('thumbs').innerHTML = thumbs.map((d, i) => `<svg width="56" height="42" viewBox="${i === 6 ? '2 2 52 38' : '1 1 54 40'}"${i === 6 ? ' class="sel"' : ''}>${d}</svg>`).join('');
```
